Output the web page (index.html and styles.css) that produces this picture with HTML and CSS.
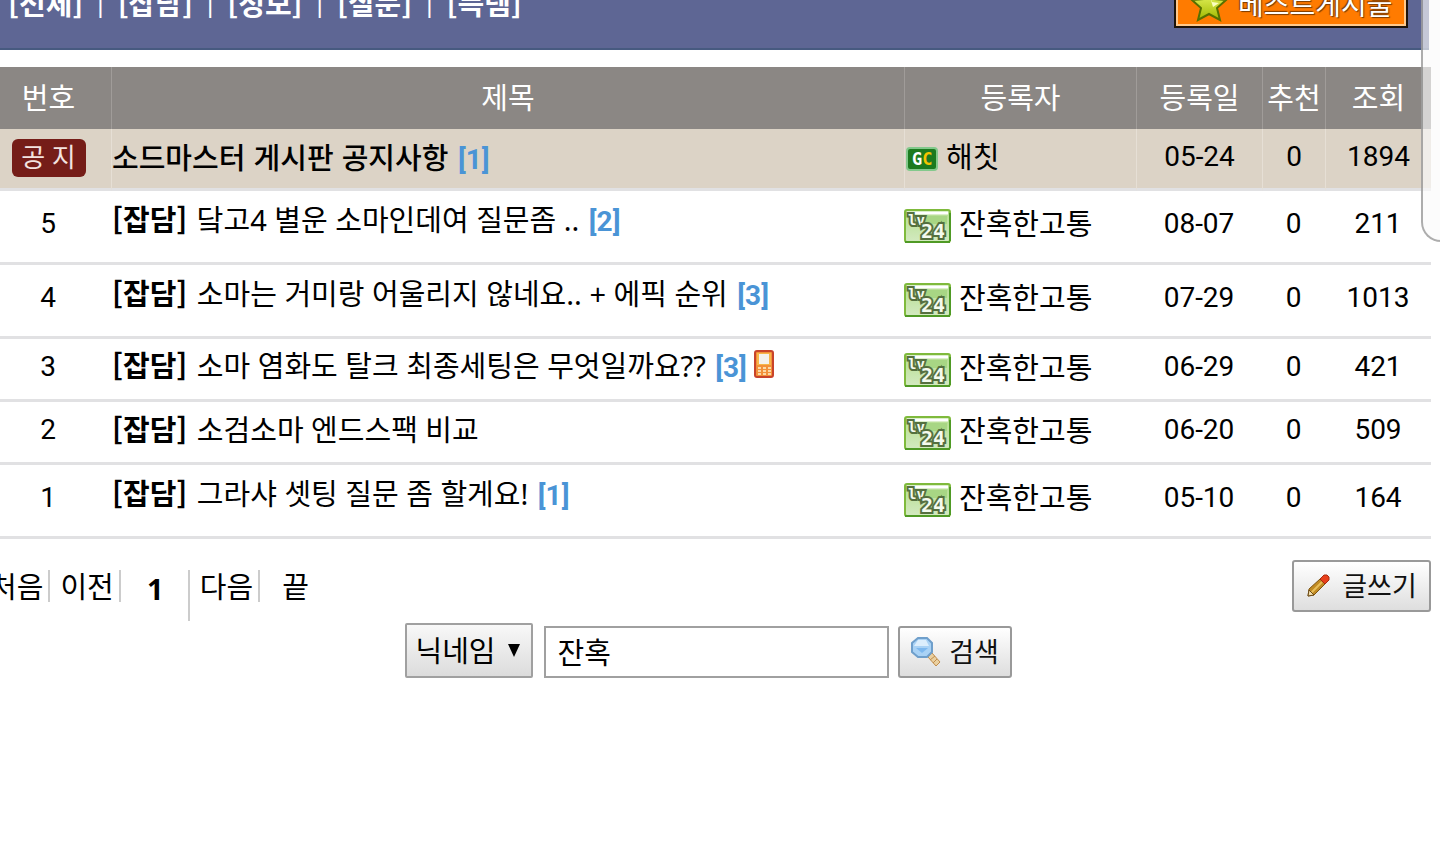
FILE: index.html
```html
<!DOCTYPE html>
<html lang="ko">
<head>
  <meta charset="UTF-8">
  <meta name="viewport" content="width=device-width, initial-scale=1.0">
  <title>소드마스터 게시판</title>
  <link rel="stylesheet" href="styles.css">
</head>
<body>
  <!-- 공용 아이콘 -->
  <svg class="sprite" aria-hidden="true">
    <defs>
      <linearGradient id="lv-bg" x1="0" y1="0" x2="0" y2="1">
        <stop offset="0" stop-color="#b4dd8e"/>
        <stop offset="1" stop-color="#d3eac0"/>
      </linearGradient>
      <linearGradient id="star-bg" x1="0" y1="0" x2="0" y2="1">
        <stop offset="0" stop-color="#f4ff70"/>
        <stop offset="1" stop-color="#9fb800"/>
      </linearGradient>
    </defs>
    <symbol id="lv24" viewBox="0 0 47 35">
      <rect x="1" y="1" width="45" height="32" rx="2" fill="url(#lv-bg)" stroke="#7fba3c" stroke-width="2"/>
      <path d="M3 4h41" stroke="#fff" stroke-width="3"/>
      <path d="M20 7h23v8H20z" fill="#a8d684"/>
      <path d="M1 33h45M46 4v28" stroke="#4f9a25" stroke-width="2"/>
      <text x="4" y="16" class="lv-small">lv</text>
      <text x="17" y="29" class="lv-num">24</text>
    </symbol>
  </svg>

  <div class="board">
    <div class="top-bar">
      <nav class="category">
        <a href="#">[전체]</a><span>|</span>
        <a href="#">[잡담]</a><span>|</span>
        <a href="#">[정보]</a><span>|</span>
        <a href="#">[질문]</a><span>|</span>
        <a href="#">[득템]</a>
      </nav>
      <a href="#" class="best">
        <svg width="38" height="36" viewBox="0 0 38 36"><path d="M19 2l5 11 12 1-9 8 3 12-11-6-11 6 3-12-9-8 12-1z" fill="url(#star-bg)" stroke="#557000" stroke-width="2"/><path d="M19 8l3 8 7 1-6 4z" fill="#fbffc0"/></svg>
        <span>베스트게시물</span>
      </a>
    </div>

    <table class="list">
      <colgroup>
        <col class="c-num"><col><col class="c-user"><col class="c-date"><col class="c-good"><col class="c-hit">
      </colgroup>
      <thead>
        <tr><th>번호</th><th>제목</th><th>등록자</th><th>등록일</th><th>추천</th><th>조회</th></tr>
      </thead>
      <tbody>
        <tr class="notice">
          <td><span class="badge">공 지</span></td>
          <td class="title"><a href="#"><b>소드마스터 게시판 공지사항</b></a> <b class="reply">[1]</b></td>
          <td class="user"><svg class="gc" width="32" height="24" viewBox="0 0 32 24"><rect x="1" y="1" width="30" height="22" rx="3" fill="#1c7a1f" stroke="#83c98c" stroke-width="2"/><text x="6" y="18" class="gc-text">G<tspan fill="#f5c400">C</tspan></text></svg>해칫</td>
          <td>05-24</td><td>0</td><td>1894</td>
        </tr>
        <tr class="tall">
          <td>5</td>
          <td class="title"><a href="#"><b class="cat">[잡담]</b> 닼고4 별운 소마인데여 질문좀 ..</a> <b class="reply">[2]</b></td>
          <td class="user"><svg class="lv"><use href="#lv24"/></svg>잔혹한고통</td>
          <td>08-07</td><td>0</td><td>211</td>
        </tr>
        <tr class="tall">
          <td>4</td>
          <td class="title"><a href="#"><b class="cat">[잡담]</b> 소마는 거미랑 어울리지 않네요.. + 에픽 순위</a> <b class="reply">[3]</b></td>
          <td class="user"><svg class="lv"><use href="#lv24"/></svg>잔혹한고통</td>
          <td>07-29</td><td>0</td><td>1013</td>
        </tr>
        <tr>
          <td>3</td>
          <td class="title"><a href="#"><b class="cat">[잡담]</b> 소마 염화도 탈크 최종세팅은 무엇일까요??</a> <b class="reply">[3]</b>
            <svg class="phone" width="20" height="28" viewBox="0 0 20 28"><rect x="1" y="1" width="18" height="26" rx="2" fill="#f2913a" stroke="#c8432a" stroke-width="2"/><path d="M3 3h14v12H3z" fill="#f7b64a"/><path d="M5 4h10v10H5z" fill="#f4f2ee"/><path d="M4 18h3m2 0h3m2 0h3M4 21h3m2 0h3m2 0h3M4 24h3m2 0h3m2 0h3" stroke="#fbd9a8" stroke-width="2"/></svg>
          </td>
          <td class="user"><svg class="lv"><use href="#lv24"/></svg>잔혹한고통</td>
          <td>06-29</td><td>0</td><td>421</td>
        </tr>
        <tr>
          <td>2</td>
          <td class="title"><a href="#"><b class="cat">[잡담]</b> 소검소마 엔드스팩 비교</a></td>
          <td class="user"><svg class="lv"><use href="#lv24"/></svg>잔혹한고통</td>
          <td>06-20</td><td>0</td><td>509</td>
        </tr>
        <tr class="tall">
          <td>1</td>
          <td class="title"><a href="#"><b class="cat">[잡담]</b> 그라샤 셋팅 질문 좀 할게요!</a> <b class="reply">[1]</b></td>
          <td class="user"><svg class="lv"><use href="#lv24"/></svg>잔혹한고통</td>
          <td>05-10</td><td>0</td><td>164</td>
        </tr>
      </tbody>
    </table>

    <div class="bottom">
      <nav class="pager">
        <a href="#">처음</a>
        <a href="#">이전</a>
        <b>1</b>
        <a href="#">다음</a>
        <a href="#" class="last">끝</a>
      </nav>
      <button type="button" class="btn write">
        <svg width="24" height="24" viewBox="0 0 24 24"><path d="M2 22l1-7L14 5l5 5L8 21z" fill="#c08a22" stroke="#7d5412"/><path d="M5 19L16 8" stroke="#e8be5a" stroke-width="2"/><path d="M2 22l1-6 5 5z" fill="#f3dfae" stroke="#6b4a16"/><path d="M14 5l4-4h3l2 2v3l-4 4z" fill="#e8401c" stroke="#a82c10"/></svg>
        <span>글쓰기</span>
      </button>
    </div>

    <form class="search">
      <div class="select-box">
        <select aria-label="검색 조건">
          <option>닉네임</option>
          <option>제목</option>
        </select>
      </div>
      <input type="text" value="잔혹" aria-label="검색어">
      <button type="submit" class="btn">
        <svg width="32" height="32" viewBox="0 0 32 32"><path d="M18 21l4-4 8 9-4 4z" fill="#ead0a0" stroke="#c18d4c"/><path d="M20 24l5-4M23 27l4-4" stroke="#c18d4c"/><path d="M8 2h9l5 5v9l-5 5H8l-6-5V7z" fill="#a9d2f5" stroke="#6f9fcb" stroke-width="2"/><path d="M8 4h8l3 6H4z" fill="#dceefc"/><path d="M6 12h12l-6 5z" fill="#7db8ee"/></svg>
        <span>검색</span>
      </button>
    </form>
  </div>

  <div class="side-handle"></div>
</body>
</html>
```

FILE: styles.css
```css
* { box-sizing: border-box; margin: 0; padding: 0; }
body {
  background: #fff;
  color: #000;
  font-family: "Noto Sans", "Noto Sans CJK KR", sans-serif;
  font-size: 29px;
  line-height: 40px;
  overflow: hidden;
}
a { color: inherit; text-decoration: none; }
.sprite { display: block; width: 0; height: 0; }
.board { margin: 0 9px 0 -15px; }

.top-bar {
  display: flex;
  justify-content: space-between;
  height: 50px;
  margin-right: 2px;
  padding: 0 21px 0 23px;
  background: #5e6694;
  border-bottom: 2px solid #475a80;
  overflow: hidden;
}
.category {
  display: flex;
  gap: 10px;
  margin-top: -18px;
  color: #fff;
}
.category a {
  font-family: "Noto Sans CJK KR", sans-serif;
  font-weight: 700;
}
.category span { font-size: 26px; font-weight: 400; }
.best {
  display: flex;
  align-items: center;
  gap: 10px;
  width: 234px;
  height: 52px;
  margin-top: -24px;
  padding: 4px 0 0 14px;
  background: #ff7b00;
  border: 2px solid #1c1208;
  box-shadow: inset 0 0 0 2px #ffc98c;
  color: #fff;
  font-size: 28px;
  text-shadow: 1px 1px 1px #7a3b00, -1px -1px 1px #7a3b00;
  white-space: nowrap;
}

.list {
  width: 100%;
  margin-top: 17px;
  border-collapse: separate;
  border-spacing: 0;
  table-layout: fixed;
}
.c-num { width: 126px; }
.c-user { width: 232px; }
.c-date { width: 126px; }
.c-good { width: 63px; }
.c-hit { width: 106px; }
.list th {
  height: 62px;
  background: #8b8784;
  border-left: 1px solid #a09c99;
  color: #fff;
  font-weight: 400;
  white-space: nowrap;
}
.list td {
  height: 63px;
  padding: 0 0 4px;
  border-bottom: 3px solid #e1e1e3;
  font-family: Roboto, "Noto Sans CJK KR", sans-serif;
  font-size: 28px;
  text-align: center;
  vertical-align: middle;
  white-space: nowrap;
}
.list .tall td { height: 74px; padding-bottom: 6px; }
.list td.title, .list td.user {
  font-family: "Noto Sans", "Noto Sans CJK KR", sans-serif;
  font-size: 29px;
  text-align: left;
}
.list td.title { padding-bottom: 6px; }
.list td.user { padding-bottom: 2px; }
.list .tall td.user { padding-bottom: 5px; }
.list .tall td.title { padding-bottom: 13px; }
.list .notice td {
  height: 62px;
  padding-bottom: 4px;
  background: #dcd3c6;
  border-left: 1px solid #e6dfd5;
}
.list .notice td.title { padding-bottom: 2px; }
.title b {
  font-family: "Noto Sans CJK KR", sans-serif;
  font-weight: 700;
}
.title .cat { margin: 0 2px 0 1px; }
.title .reply { margin-left: 2px; }
.list .notice b { font-weight: 500; }
.list .title .reply {
  color: #4a94d6;
  font-family: Roboto, sans-serif;
  font-size: 28px;
  font-weight: 700;
}
.badge {
  display: inline-block;
  width: 74px;
  height: 38px;
  background: #751d18;
  border-radius: 6px;
  color: #f3e4e0;
  font-size: 26px;
  line-height: 38px;
  vertical-align: middle;
}
.lv {
  width: 47px;
  height: 35px;
  margin-right: 8px;
  vertical-align: -9px;
}
.gc { margin: 0 8px 0 1px; vertical-align: -3px; }
.phone { vertical-align: -1px; }
.lv-small, .lv-num, .gc-text {
  font-family: "DejaVu Sans Mono", monospace;
  font-weight: 700;
}
.lv-small, .lv-num {
  fill: #f4faee;
  stroke: #55703f;
  stroke-width: 4px;
  paint-order: stroke;
}
.lv-small { font-size: 14px; }
.lv-num { font-size: 20px; }
.gc-text { font-size: 17px; fill: #fff; }

.bottom {
  display: flex;
  justify-content: space-between;
  align-items: flex-start;
  margin-top: 21px;
}
.pager { display: flex; padding-top: 10px; }
.pager a, .pager b {
  height: 32px;
  padding: 0 5px 0 10px;
  border-right: 2px solid #ccc;
  line-height: 34px;
}
.pager a:first-child { padding-left: 5px; }
.pager b {
  width: 69px;
  height: 51px;
  padding: 0 0 0 2px;
  line-height: 38px;
  text-align: center;
}
.pager .last { padding-left: 22px; border: none; }

.btn {
  display: flex;
  align-items: center;
  justify-content: center;
  gap: 7px;
  width: 114px;
  height: 52px;
  background: linear-gradient(#fff, #dedede);
  border: 2px solid #999;
  border-radius: 3px;
  color: #111;
  font-family: inherit;
  font-size: 27px;
  line-height: 40px;
  white-space: nowrap;
  cursor: pointer;
}
.write { width: 139px; gap: 12px; }
.search {
  display: flex;
  align-items: flex-end;
  justify-content: center;
  margin-top: 2px;
}
.select-box { position: relative; margin-right: 11px; }
.select-box::after {
  content: "";
  position: absolute;
  top: 21px;
  right: 13px;
  border: 6px solid transparent;
  border-top: 13px solid #000;
  border-bottom: none;
  pointer-events: none;
}
.search select {
  display: block;
  width: 128px;
  height: 55px;
  padding-left: 9px;
  appearance: none;
  background: linear-gradient(#f8f8f8, #dcdcdc);
  border: 2px solid #a0a0a0;
  border-radius: 2px;
  color: #000;
  font: inherit;
}
.search input {
  width: 345px;
  height: 52px;
  margin-right: 9px;
  padding: 0 12px 2px;
  border: 2px solid #a0a0a0;
  font: inherit;
}

/* 오른쪽 손잡이 패널 */
.side-handle {
  position: absolute;
  top: -20px;
  right: -20px;
  width: 39px;
  height: 262px;
  background: rgba(250, 250, 250, .66);
  border: 2px solid rgba(110, 110, 110, .55);
  border-radius: 0 0 0 20px;
}
```
